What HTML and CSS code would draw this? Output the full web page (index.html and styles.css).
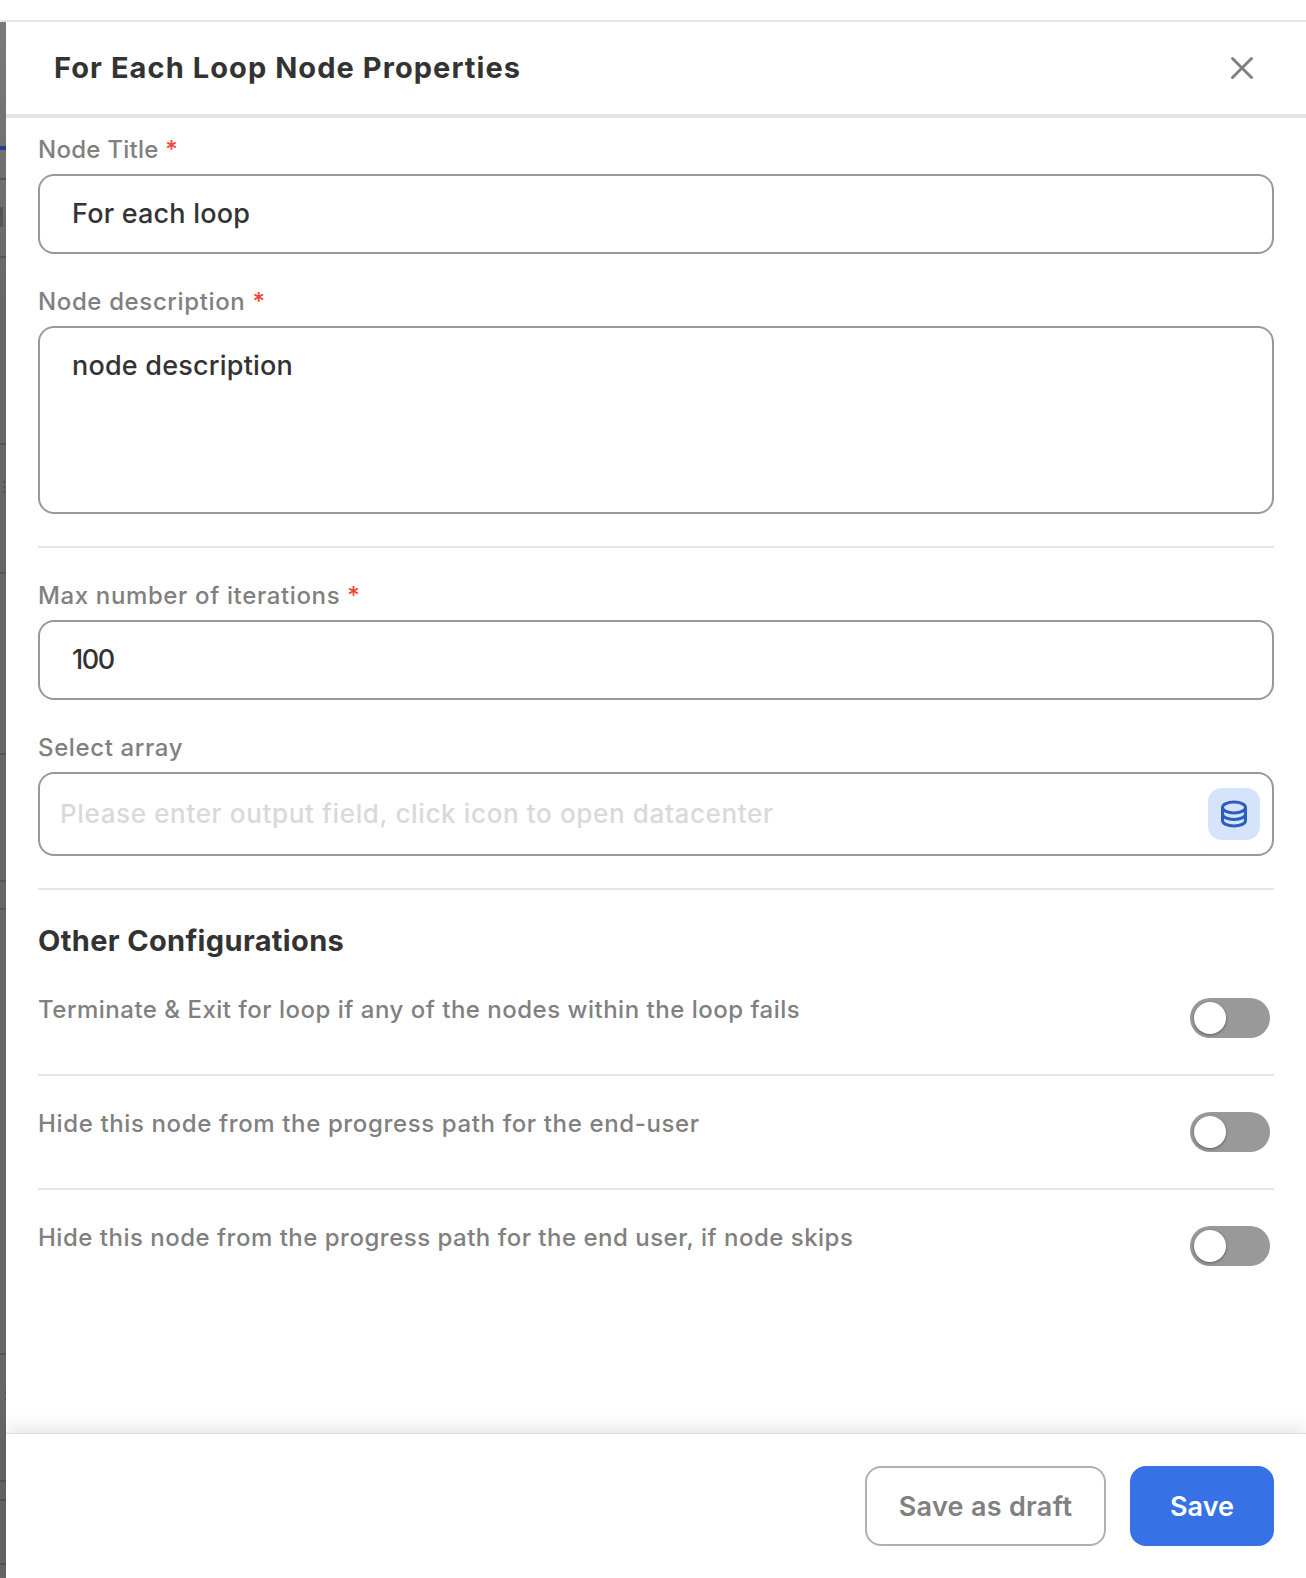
FILE: index.html
```html
<!DOCTYPE html>
<html>
<head>
  <title>For Each Loop Node Properties</title>
  <link rel="stylesheet" href="styles.css">
</head>
<body>
  <div class="top-strip"></div>
  <div class="layout">
    <!-- what is left of the page behind the drawer -->
    <svg class="backdrop" width="6" height="1556" viewBox="0 0 6 1556">
      <rect class="blue" x="0" y="124" width="6" height="4" />
      <rect class="mark" x="0" y="156" width="6" height="2" />
      <rect class="mark" x="0" y="185" width="3" height="20" />
      <rect class="mark" x="0" y="234" width="6" height="2" />
      <rect class="mark" x="0" y="421" width="6" height="2" />
      <rect class="mark" x="3" y="459" width="2" height="2" />
      <rect class="mark" x="3" y="464" width="2" height="2" />
      <rect class="mark" x="3" y="469" width="2" height="2" />
      <rect class="mark" x="0" y="550" width="6" height="2" />
      <rect class="mark" x="0" y="731" width="6" height="2" />
      <rect class="mark" x="0" y="858" width="6" height="2" />
      <rect class="mark" x="0" y="886" width="6" height="2" />
      <rect class="mark" x="0" y="1331" width="6" height="2" />
      <rect class="mark" x="5" y="1364" width="1" height="2" />
      <rect class="mark" x="5" y="1370" width="1" height="2" />
      <rect class="mark" x="5" y="1376" width="1" height="2" />
      <rect class="mark" x="0" y="1458" width="6" height="2" />
      <rect class="mark" x="0" y="1477" width="6" height="2" />
      <rect class="mark" x="0" y="1541" width="6" height="2" />
    </svg>

    <div class="drawer">
      <header class="drawer-head">
        <h1>For Each Loop Node Properties</h1>
        <svg class="close-icon" width="24" height="24" viewBox="0 0 24 24">
          <path d="M2.5 2.5 L21.5 21.5 M21.5 2.5 L2.5 21.5" />
        </svg>
      </header>

      <div class="drawer-body">
        <div class="field">
          <label class="label-short">Node Title <span class="req">*</span></label>
          <div class="box"><span class="value">For each loop</span></div>
        </div>

        <div class="field">
          <label>Node description <span class="req">*</span></label>
          <div class="box box-area"><span class="value">node description</span></div>
        </div>

        <hr class="line">

        <div class="field">
          <label>Max number of iterations <span class="req">*</span></label>
          <div class="box"><span class="value value-num">100</span></div>
        </div>

        <div class="field">
          <label>Select array</label>
          <div class="box box-select">
            <span class="placeholder">Please enter output field, click icon to open datacenter</span>
            <span class="icon-btn">
              <svg width="28" height="28" viewBox="0 0 28 28">
                <ellipse cx="14" cy="7.5" rx="11.5" ry="5.5" />
                <path d="M2.5 7.5 V20.5 C2.5 23.5 7.5 26 14 26 C20.5 26 25.5 23.5 25.5 20.5 V7.5" />
                <path d="M2.5 14 C2.5 17 7.5 19.5 14 19.5 C20.5 19.5 25.5 17 25.5 14" />
              </svg>
            </span>
          </div>
        </div>

        <hr class="line">

        <h2>Other Configurations</h2>

        <div class="row">
          <span>Terminate &amp; Exit for loop if any of the nodes within the loop fails</span>
          <span class="toggle"></span>
        </div>
        <div class="row row-wide">
          <span>Hide this node from the progress path for the end-user</span>
          <span class="toggle"></span>
        </div>
        <div class="row row-last">
          <span>Hide this node from the progress path for the end user, if node skips</span>
          <span class="toggle"></span>
        </div>
      </div>

      <footer class="drawer-foot">
        <button class="btn btn-draft">Save as draft</button>
        <button class="btn btn-save">Save</button>
      </footer>
    </div>
  </div>
</body>
</html>
```

FILE: styles.css
```css
* {
  box-sizing: border-box;
  margin: 0;
  padding: 0;
  font-family: Inter, "Noto Sans", sans-serif;
}

body {
  background-color: white;
  height: 1578px;
  overflow: hidden;
}

.top-strip {
  height: 22px;
  border-bottom: 2px solid #e5e5e5;
}

.layout {
  display: flex;
  height: 1556px;
}

.backdrop {
  flex: none;
  display: block;
  background: linear-gradient(#7a7a7a, #666 300px);
}

.backdrop .mark {
  fill: #555;
}

.backdrop .blue {
  fill: #1f3f8c;
}

.drawer {
  flex: 1;
  display: flex;
  flex-direction: column;
  min-width: 0;
}

/* header */
.drawer-head {
  height: 96px;
  padding: 0 52px 0 48px;
  border-bottom: 4px solid #e5e5e5;
  display: flex;
  align-items: center;
  justify-content: space-between;
}

h1 {
  font-size: 29px;
  font-weight: 700;
  letter-spacing: 1.07px;
  margin-bottom: 2px;
  color: #333;
}

.close-icon path {
  fill: none;
  stroke: #808080;
  stroke-width: 3;
  stroke-linecap: round;
}

/* form */
.drawer-body {
  flex: 1;
  padding: 16px 32px 0 32px;
}

.field {
  margin-bottom: 32px;
}

label {
  display: block;
  font-size: 24px;
  line-height: 32px;
  margin-bottom: 8px;
  font-weight: 500;
  letter-spacing: 0.63px;
  color: #808080;
}

.label-short {
  letter-spacing: 0.25px;
}

.req {
  color: #f04438;
}

.box {
  height: 80px;
  border: 2px solid #999;
  border-radius: 16px;
  padding: 0 32px 2px;
  display: flex;
  align-items: center;
}

.box-area {
  height: 188px;
  align-items: flex-start;
  padding-top: 21px;
}

.box-select {
  height: 84px;
  padding: 0 12px 2px 20px;
  justify-content: space-between;
}

.value {
  font-size: 27px;
  font-weight: 500;
  letter-spacing: 0.2px;
  color: #333;
}

.value-num {
  letter-spacing: -1.5px;
}

.placeholder {
  font-size: 26px;
  font-weight: 500;
  letter-spacing: 0.64px;
  color: #d9d9d9;
}

.icon-btn {
  width: 52px;
  height: 52px;
  margin-top: 2px;
  border-radius: 14px;
  background-color: #d6e4fb;
  display: flex;
  align-items: center;
  justify-content: center;
}

.icon-btn svg * {
  fill: none;
  stroke: #2a5dbd;
  stroke-width: 3;
}

.line {
  border: none;
  border-top: 2px solid #e5e5e5;
  margin: 32px 0;
}

h2 {
  font-size: 29px;
  line-height: 38px;
  font-weight: 700;
  letter-spacing: 0.35px;
  color: #333;
  margin-bottom: 2px;
}

.row {
  height: 114px;
  padding: 32px 4px 0 0;
  border-bottom: 2px solid #e5e5e5;
  display: flex;
  justify-content: space-between;
  align-items: flex-start;
  font-size: 24px;
  line-height: 32px;
  font-weight: 500;
  letter-spacing: 0.5px;
  color: #808080;
}

.row-wide {
  letter-spacing: 0.63px;
}

.row-last {
  border-bottom: none;
}

.toggle {
  width: 80px;
  height: 40px;
  margin-top: 4px;
  border-radius: 20px;
  background-color: #999;
  padding: 4px;
  display: block;
}

.toggle::before {
  content: "";
  display: block;
  width: 32px;
  height: 32px;
  border-radius: 50%;
  background-color: white;
  box-shadow: 0 1px 3px rgba(0,0,0,0.4);
}

/* footer */
.drawer-foot {
  height: 145px;
  padding: 32px 32px 0 0;
  border-top: 1px solid #ddd;
  box-shadow: 0 -6px 16px rgba(0,0,0,0.1);
  display: flex;
  justify-content: flex-end;
  align-items: flex-start;
  gap: 24px;
}

.btn {
  height: 80px;
  border-radius: 16px;
  font-size: 27px;
  font-weight: 600;
}

.btn-draft {
  width: 241px;
  background-color: white;
  border: 2px solid #b0b0b0;
  letter-spacing: 0.3px;
  color: #808080;
}

.btn-save {
  width: 144px;
  background-color: #3771e6;
  border: none;
  color: white;
}
```
